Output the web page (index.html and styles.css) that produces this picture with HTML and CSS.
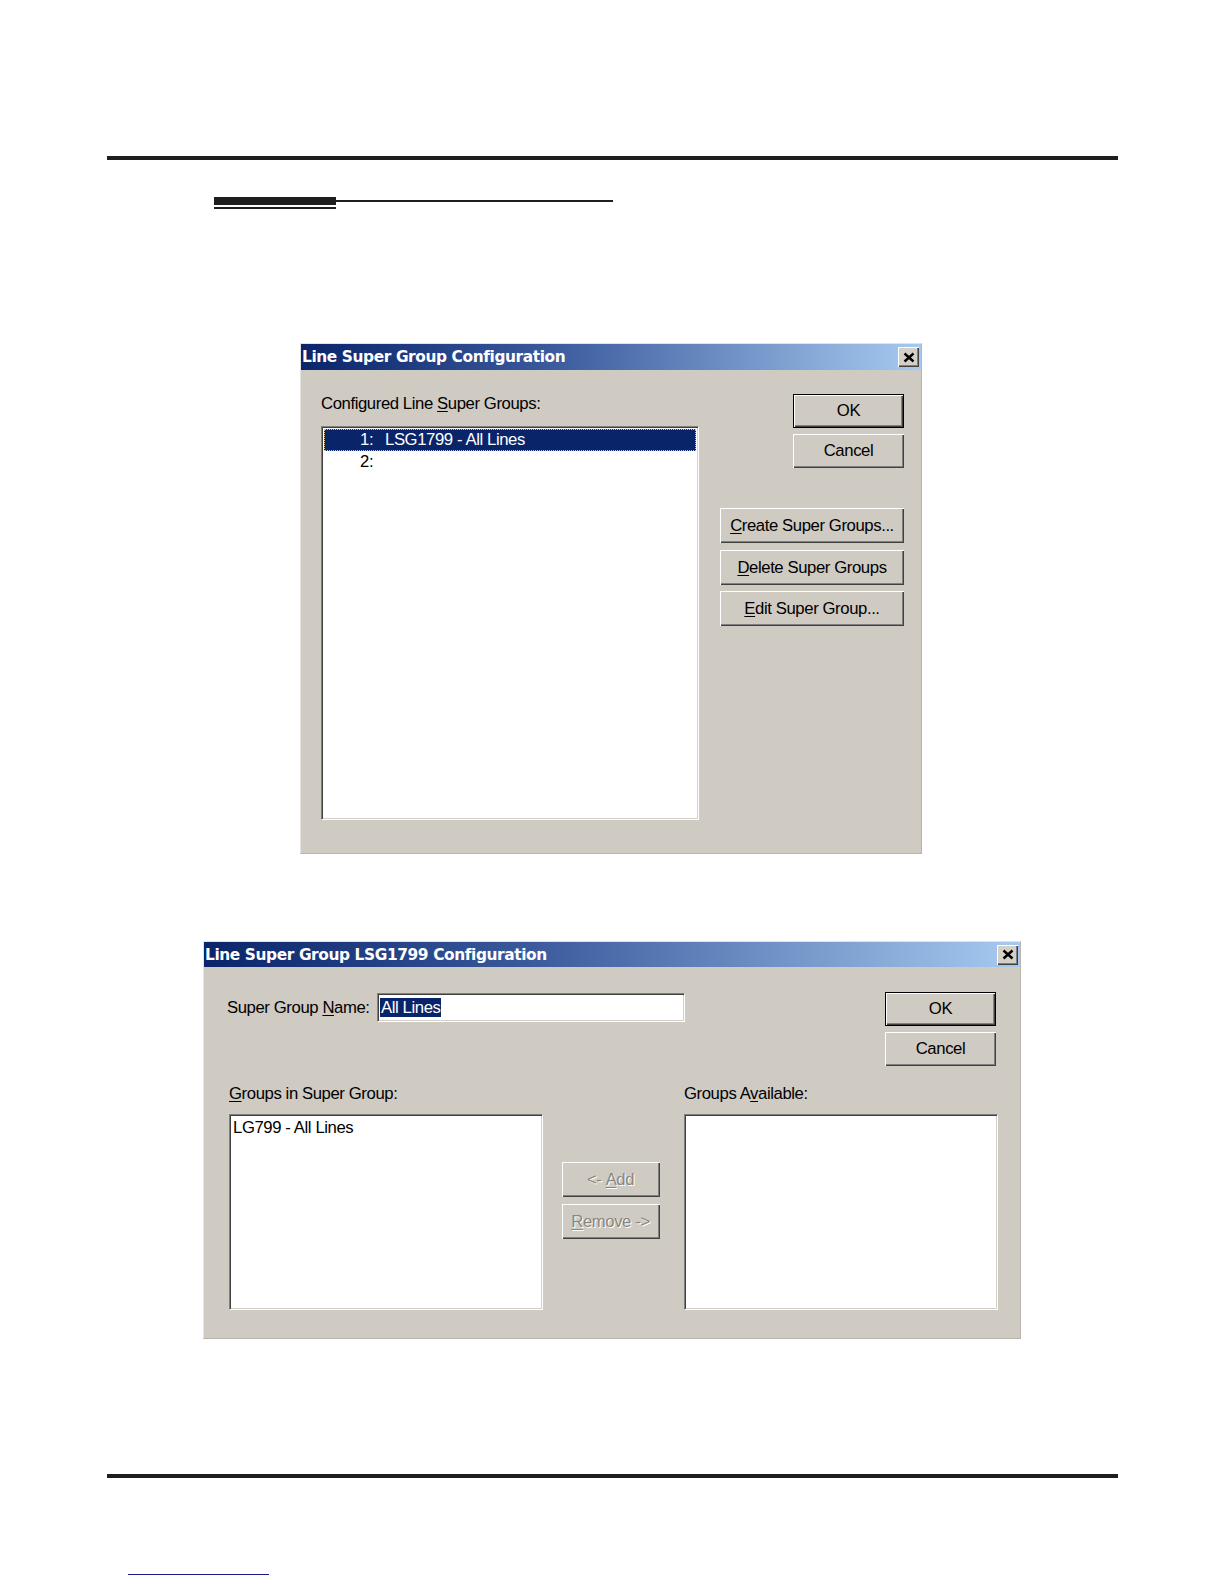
FILE: index.html
```html
<!DOCTYPE html>
<html>
<head>
<meta charset="utf-8">
<link rel="stylesheet" href="styles.css">
</head>
<body>
<div class="page">
  <div class="rule rule-top"></div>
  <div class="heading-bar">
    <div class="hb-left"><div class="hb-thick"></div><div class="hb-thin"></div></div>
    <div class="hb-line"></div>
  </div>

  <div class="dialog dlg1">
    <div class="titlebar">
      <span class="title">Line Super Group Configuration</span>
      <span class="close-btn"><svg width="12" height="11" viewBox="0 0 12 11"><path d="M1.5 1.5 L10.5 9.5 M10.5 1.5 L1.5 9.5" stroke="#000" stroke-width="2.4" fill="none"/></svg></span>
    </div>
    <div class="dlg-body dlg1-body">
      <div class="dlg1-left">
        <div class="label">Configured Line <span class="ak">S</span>uper Groups:</div>
        <div class="listbox list1">
          <div class="item selected"><span class="num">1:</span>LSG1799 - All Lines</div>
          <div class="item"><span class="num">2:</span></div>
        </div>
      </div>
      <div class="dlg1-right">
        <div class="btn default btn-ok">OK</div>
        <div class="btn btn-ok btn-cancel">Cancel</div>
        <div class="btn btn-wide btn-create"><span><span class="ak">C</span>reate Super Groups...</span></div>
        <div class="btn btn-wide btn-delete"><span><span class="ak">D</span>elete Super Groups</span></div>
        <div class="btn btn-wide btn-edit"><span><span class="ak">E</span>dit Super Group...</span></div>
      </div>
    </div>
  </div>

  <div class="dialog dlg2">
    <div class="titlebar">
      <span class="title">Line Super Group LSG1799 Configuration</span>
      <span class="close-btn"><svg width="12" height="11" viewBox="0 0 12 11"><path d="M1.5 1.5 L10.5 9.5 M10.5 1.5 L1.5 9.5" stroke="#000" stroke-width="2.4" fill="none"/></svg></span>
    </div>
    <div class="dlg-body dlg2-body">
      <div class="top-row">
        <div class="label name-label">Super Group <span class="ak">N</span>ame:</div>
        <div class="textbox"><span class="sel-text">All Lines</span></div>
        <div class="top-buttons">
          <div class="btn default btn-ok">OK</div>
          <div class="btn btn-ok btn-cancel">Cancel</div>
        </div>
      </div>
      <div class="lower">
        <div class="label"><span class="ak">G</span>roups in Super Group:</div>
        <div></div>
        <div class="label">Groups A<span class="ak">v</span>ailable:</div>
        <div class="listbox list2">
          <div class="item plain">LG799 - All Lines</div>
        </div>
        <div class="mid-buttons">
          <div class="btn btn-mid disabled">&lt;-&nbsp;<span class="ak">A</span>dd</div>
          <div class="btn btn-mid disabled"><span class="ak">R</span>emove -&gt;</div>
        </div>
        <div class="listbox list2"></div>
      </div>
    </div>
  </div>

  <div class="rule rule-bottom"></div>
  <div class="link-line"></div>
</div>
</body>
</html>
```

FILE: styles.css
```css
html, body {
  margin: 0;
  padding: 0;
  background: #ffffff;
}

.page {
  width: 1224px;
  height: 1584px;
  padding-top: 156px;
  box-sizing: border-box;
  overflow: hidden;
  font-family: "Liberation Sans", Arial, sans-serif;
  color: #000;
}

.rule {
  margin-left: 107px;
  width: 1011px;
  height: 4px;
  background: #1e1e1e;
}

.heading-bar {
  display: flex;
  align-items: flex-start;
  margin-top: 37px;
  margin-left: 214px;
}

.hb-left {
  width: 122px;
}

.hb-thick {
  height: 8px;
  background: #1e1e1e;
}

.hb-thin {
  height: 2px;
  margin-top: 2px;
  background: #1e1e1e;
}

.hb-line {
  width: 277px;
  height: 2px;
  margin-top: 3px;
  background: #1e1e1e;
}

/* dialogs */
.dialog {
  background: #cfcac2;
  box-sizing: border-box;
  border-left: 1px solid #e6e3dc;
  border-top: 1px solid #e6e3dc;
  border-right: 1px solid #b9b4ac;
  border-bottom: 1px solid #b9b4ac;
  font-size: 16.7px;
  letter-spacing: -0.4px;
}

.dlg1 {
  width: 622px;
  margin-left: 300px;
  margin-top: 134px;
}

.dlg2 {
  width: 818px;
  margin-left: 203px;
  margin-top: 87px;
}

.titlebar {
  display: flex;
  align-items: center;
  justify-content: space-between;
  height: 26px;
  padding: 0 2px 0 1px;
  background: linear-gradient(to right, #0a246a 0%, #3a5a9c 40%, #a6caf0 100%);
}

.dlg2 .titlebar {
  height: 25px;
}

.title {
  font-family: "DejaVu Sans", Verdana, sans-serif;
  font-weight: bold;
  font-size: 15.4px;
  letter-spacing: -0.4px;
  color: #ffffff;
  white-space: nowrap;
}

.close-btn {
  width: 21px;
  height: 20px;
  box-sizing: border-box;
  display: flex;
  align-items: center;
  justify-content: center;
  background: #d4d0c8;
  box-shadow: inset 1px 1px 0 #ffffff, inset -1px -1px 0 #404040, inset -2px -2px 0 #808080;
}

.dlg-body {
  box-sizing: border-box;
}

.dlg1-body {
  display: flex;
  padding: 24px 17px 33px 20px;
}

.dlg1-left {
  width: 378px;
}

.label {
  line-height: 20px;
  white-space: nowrap;
}

.ak {
  text-decoration: underline;
  text-underline-offset: 2px;
}

.listbox {
  box-sizing: border-box;
  background: #ffffff;
  border-top: 1px solid #808080;
  border-left: 1px solid #808080;
  border-right: 1px solid #ffffff;
  border-bottom: 1px solid #ffffff;
  box-shadow: inset 1px 1px 0 #404040, inset -1px -1px 0 #d4d0c8;
  padding: 2px;
}

.list1 {
  margin-top: 12px;
  height: 394px;
}

.item {
  height: 22px;
  line-height: 22px;
  padding-left: 36px;
  white-space: nowrap;
}

.item .num {
  display: inline-block;
  width: 25px;
}

.item.selected {
  background: #0a246a;
  color: #ffffff;
  outline: 1px dotted #d8c890;
  outline-offset: -1px;
}

.item.plain {
  padding-left: 1px;
}

.dlg1-right {
  margin-left: auto;
  width: 184px;
  display: flex;
  flex-direction: column;
  align-items: flex-end;
}

.btn {
  box-sizing: border-box;
  display: flex;
  align-items: center;
  justify-content: center;
  background: #cfcac2;
  box-shadow: inset 1px 1px 0 #ffffff, inset -1px -1px 0 #404040, inset -2px -2px 0 #808080;
  white-space: nowrap;
}

.btn.default {
  border: 1px solid #000000;
}

.btn-ok {
  width: 111px;
  height: 34px;
}

.btn-cancel {
  margin-top: 6px;
}

.btn-wide {
  width: 184px;
  height: 35px;
}

.btn-create {
  margin-top: 40px;
}

.btn-delete {
  margin-top: 7px;
}

.btn-edit {
  margin-top: 6px;
}

/* dialog 2 */
.dlg2-body {
  padding: 25px 24px 28px 23px;
}

.top-row {
  display: flex;
  align-items: flex-start;
}

.name-label {
  width: 150px;
  margin-top: 1px;
  line-height: 29px;
}

.textbox {
  box-sizing: border-box;
  width: 308px;
  height: 29px;
  margin-top: 1px;
  background: #ffffff;
  border-top: 1px solid #808080;
  border-left: 1px solid #808080;
  border-right: 1px solid #ffffff;
  border-bottom: 1px solid #ffffff;
  box-shadow: inset 1px 1px 0 #404040, inset -1px -1px 0 #d4d0c8;
  padding: 3px 2px;
  line-height: 21px;
}

.sel-text {
  background: #0a246a;
  color: #ffffff;
  padding: 0 1px;
}

.top-buttons {
  margin-left: auto;
  display: flex;
  flex-direction: column;
}

.lower {
  display: grid;
  grid-template-columns: 314px 98px 314px;
  justify-content: space-between;
  margin-left: 2px;
  margin-right: -2px;
  margin-top: 18px;
  row-gap: 10px;
}

.list2 {
  height: 196px;
}

.mid-buttons {
  display: flex;
  flex-direction: column;
  align-items: flex-start;
  margin-left: -3px;
  padding-top: 48px;
  gap: 7px;
}

.btn-mid {
  width: 98px;
  height: 35px;
}

.btn.disabled {
  color: #8a867e;
  text-shadow: 1px 1px 0 #ffffff;
}

.rule-bottom {
  margin-top: 135px;
}

.link-line {
  margin-left: 128px;
  margin-top: 96px;
  width: 141px;
  height: 1px;
  background: #1a1a8c;
}
```
